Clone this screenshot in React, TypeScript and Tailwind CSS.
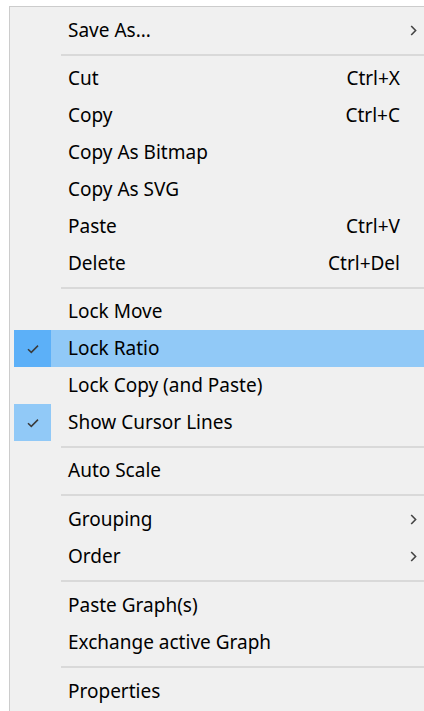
import React from 'react';

type Entry =
  | { kind: 'item'; label: string; shortcut?: string; submenu?: boolean; checked?: boolean; active?: boolean }
  | { kind: 'sep'; h: number };

const entries: Entry[] = [
  { kind: 'item', label: 'Save As...', submenu: true },
  { kind: 'sep', h: 11 },
  { kind: 'item', label: 'Cut', shortcut: 'Ctrl+X' },
  { kind: 'item', label: 'Copy', shortcut: 'Ctrl+C' },
  { kind: 'item', label: 'Copy As Bitmap' },
  { kind: 'item', label: 'Copy As SVG' },
  { kind: 'item', label: 'Paste', shortcut: 'Ctrl+V' },
  { kind: 'item', label: 'Delete', shortcut: 'Ctrl+Del' },
  { kind: 'sep', h: 11 },
  { kind: 'item', label: 'Lock Move' },
  { kind: 'item', label: 'Lock Ratio', checked: true, active: true },
  { kind: 'item', label: 'Lock Copy (and Paste)' },
  { kind: 'item', label: 'Show Cursor Lines', checked: true },
  { kind: 'sep', h: 11 },
  { kind: 'item', label: 'Auto Scale' },
  { kind: 'sep', h: 12 },
  { kind: 'item', label: 'Grouping', submenu: true },
  { kind: 'item', label: 'Order', submenu: true },
  { kind: 'sep', h: 12 },
  { kind: 'item', label: 'Paste Graph(s)' },
  { kind: 'item', label: 'Exchange active Graph' },
  { kind: 'sep', h: 12 },
  { kind: 'item', label: 'Properties' },
];

const Check = () => (
  <svg width="12" height="10" viewBox="0 0 12 10" fill="none">
    <path d="M1 5.2 L4.3 8.4 L11 1.6" stroke="#3a3a3a" strokeWidth="1.5" />
  </svg>
);

const Chevron = () => (
  <svg width="7" height="11" viewBox="0 0 7 11" fill="none">
    <path d="M1.2 1 L5.6 5.5 L1.2 10" stroke="#444" strokeWidth="1.6" />
  </svg>
);

const App = () => {
  return (
    <div
      className="w-[424px] h-[711px] overflow-hidden bg-white pl-[9px] pt-[6px]"
      style={{ fontFamily: '"Noto Sans", "Open Sans", sans-serif' }}
    >
      <div className="h-full border-l border-t border-[#cccccc] bg-[#f0f0f0] pl-[4px] pt-[5px]">
        {entries.map((e, idx) => {
          if (e.kind === 'sep') {
            return (
              <div key={idx} className="flex items-center pl-[47px]" style={{ height: e.h }}>
                <div className="h-[2px] w-full bg-[#d9d9d9]" />
              </div>
            );
          }
          return (
            <div
              key={idx}
              className={`flex h-[37px] items-center text-[19px] text-black ${e.active ? 'bg-[#91c9f7]' : ''}`}
            >
              <div
                className={`flex h-full w-[37px] items-center justify-center ${
                  e.checked ? (e.active ? 'bg-[#5cb0f8]' : 'bg-[#91c9f7]') : ''
                }`}
              >
                {e.checked && <Check />}
              </div>
              <span className="ml-[17px] flex-1 whitespace-nowrap">{e.label}</span>
              {e.shortcut && <span className="whitespace-nowrap">{e.shortcut}</span>}
              <div className="flex h-full w-[24px] items-center pl-[10px]">{e.submenu && <Chevron />}</div>
            </div>
          );
        })}
      </div>
    </div>
  );
};

export default App;
